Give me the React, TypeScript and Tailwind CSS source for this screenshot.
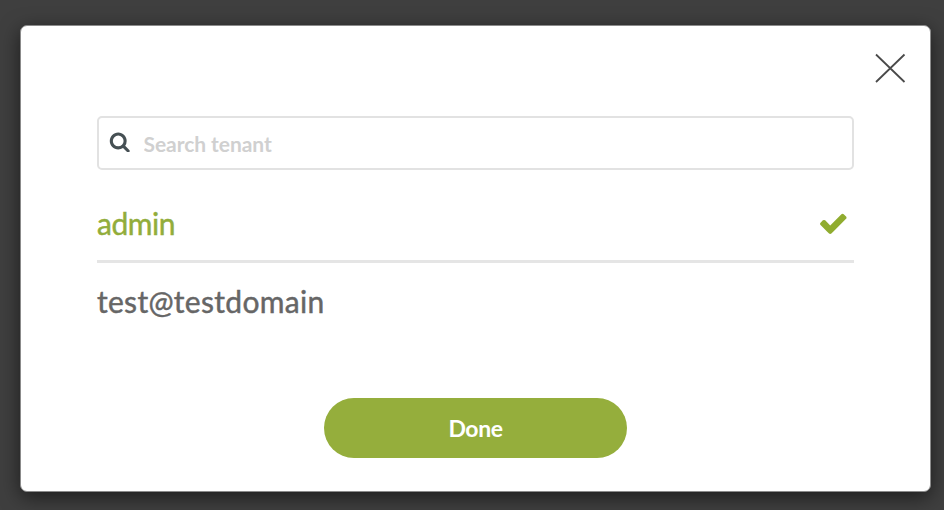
const SEARCH =
  'M1216 832q0-185-131.5-316.5t-316.5-131.5-316.5 131.5-131.5 316.5 131.5 316.5 316.5 131.5 316.5-131.5 131.5-316.5zm512 832q0 52-38 90t-90 38q-54 0-90-38l-343-342q-179 124-399 124-143 0-273.5-55.5t-225-150-150-225-55.5-273.5 55.5-273.5 150-225 225-150 273.5-55.5 273.5 55.5 225 150 150 225 55.5 273.5q0 220-124 399l343 343q37 37 37 90z';
const CHECK =
  'M1671 566q0 40-28 68l-724 724-136 136q-28 28-68 28t-68-28l-136-136-362-362q-28-28-28-68t28-68l136-136q28-28 68-28t68 28l294 295 656-657q28-28 68-28t68 28l136 136q28 28 28 68z';

export default function App() {
  return (
    <div className="h-[510px] w-[944px] overflow-hidden bg-[#3f3f3f] pl-5 pt-[25px] font-['Lato','Liberation_Sans',sans-serif]">
      <div className="flex h-[467px] w-[911px] flex-col rounded-[7px] border border-[#8b8b8b] bg-white px-[76px] shadow-[0_5px_20px_rgba(0,0,0,0.55)]">
        <div className="-mr-[52px] flex h-[90px] justify-end pt-[27px]">
          <button aria-label="Close" className="h-[30px] w-[32px]">
            <svg className="h-[30px] w-[32px]" viewBox="0 0 32 30" fill="none" stroke="#4a4a4a" strokeWidth="1.8">
              <path d="M2 1.5 30.5 29M30.5 1.5 2 29" />
            </svg>
          </button>
        </div>
        <label className="flex h-[54px] w-[757px] items-center rounded-[5px] border-2 border-[#e2e2e2] pl-[10px]">
          <svg className="-mt-[3px] h-[21.5px] w-[21.5px] shrink-0" viewBox="0 0 1792 1792" fill="#465054">
            <path d={SEARCH} />
          </svg>
          <input
            placeholder="Search tenant"
            className="ml-[13px] mt-[1px] w-[600px] text-[21px] font-bold tracking-[-0.05px] outline-none placeholder:text-[#d0d0d0]"
          />
        </label>
        <ul className="w-[757px] text-[30px] leading-[36px]">
          <li className="flex h-[93px] items-center justify-between border-b-[3px] border-[#e5e5e5] pr-[5px] text-[#92ad3b]">
            <span className="mt-[16px] tracking-[-0.45px] [-webkit-text-stroke:0.45px_#92ad3b]">admin</span>
            <svg className="mt-[17px] h-[30.6px] w-[30.6px]" viewBox="0 0 1792 1792" fill="#90ac2f">
              <path d={CHECK} />
            </svg>
          </li>
          <li className="flex h-[76px] items-center tracking-[0.3px] text-[#666] [-webkit-text-stroke:0.45px_#666]">
            test@testdomain
          </li>
        </ul>
        <button className="ml-[227px] mt-[59px] h-[60px] w-[303px] shrink-0 rounded-full bg-[#95ae3c] pt-[1px] text-[23px] font-bold tracking-[-0.4px] text-white">
          Done
        </button>
      </div>
    </div>
  );
}
